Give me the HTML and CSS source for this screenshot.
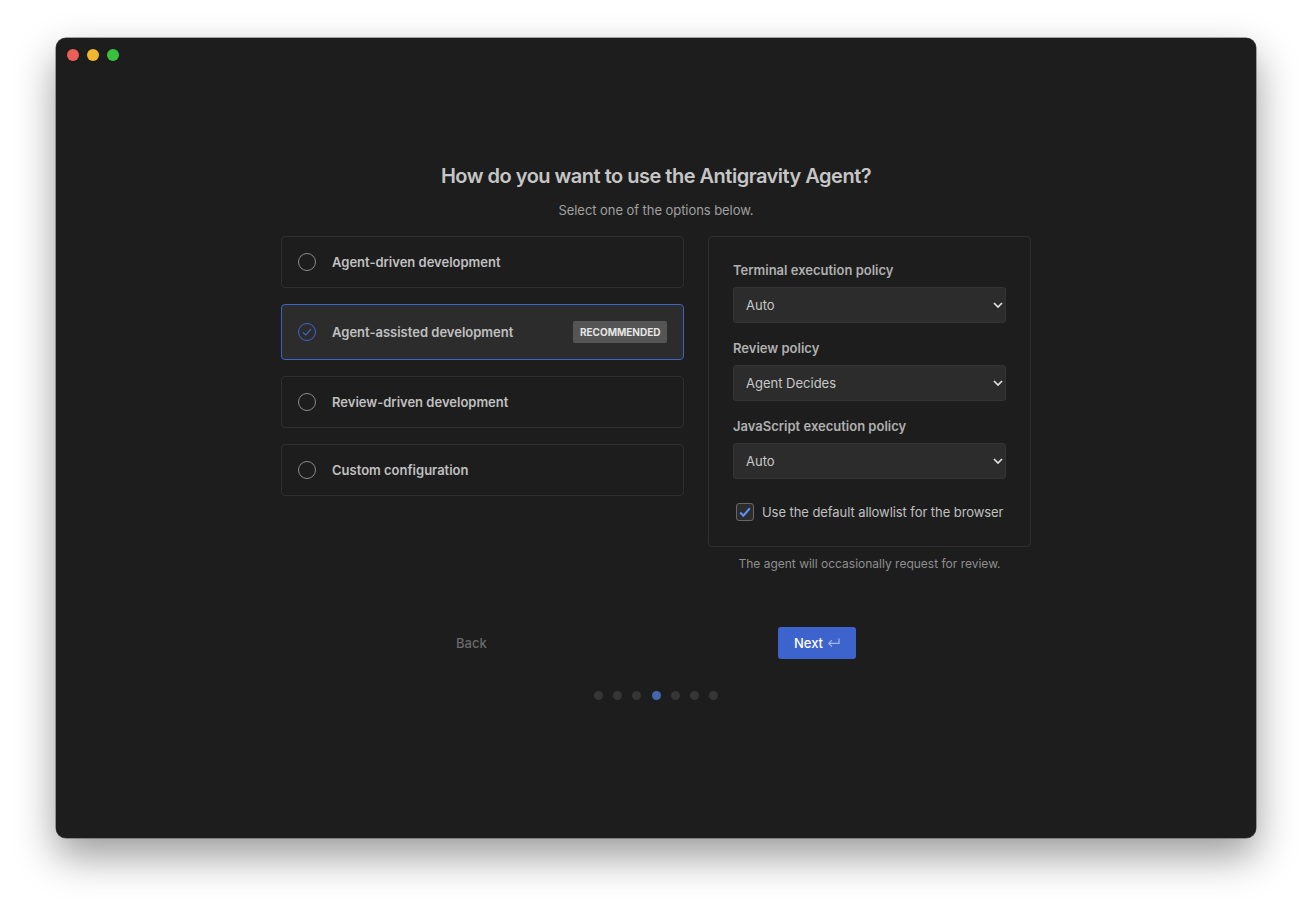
FILE: index.html
```html
<!DOCTYPE html>
<html lang="en">
<head>
<meta charset="utf-8">
<title>Antigravity Agent setup</title>
<link rel="stylesheet" href="styles.css">
</head>
<body>
<div class="window">
  <div class="titlebar">
    <span class="light light-red"></span>
    <span class="light light-yellow"></span>
    <span class="light light-green"></span>
  </div>
  <main class="main">
    <h1 class="title">How do you want to use the Antigravity Agent?</h1>
    <p class="subtitle">Select one of the options below.</p>
    <div class="columns">
      <div class="options">
        <div class="option">
          <span class="radio"></span>
          <span class="option-label">Agent-driven development</span>
        </div>
        <div class="option option-selected">
          <span class="radio radio-selected">
            <svg class="radio-check" viewBox="0 0 12 12" width="12" height="12"><path d="M2 6.4 4.8 9 10 3.2" fill="none" stroke="#3f66cc" stroke-width="1.2"/></svg>
          </span>
          <span class="option-label">Agent-assisted development</span>
          <span class="badge">RECOMMENDED</span>
        </div>
        <div class="option">
          <span class="radio"></span>
          <span class="option-label">Review-driven development</span>
        </div>
        <div class="option">
          <span class="radio"></span>
          <span class="option-label">Custom configuration</span>
        </div>
      </div>
      <div class="side">
        <div class="panel">
          <div class="field">
            <label class="field-label" for="terminal">Terminal execution policy</label>
            <div class="select-wrap">
              <select class="select" id="terminal"><option>Auto</option></select>
              <svg class="chevron" viewBox="0 0 10 6" width="10" height="6"><path d="M1 1 5 5 9 1" fill="none" stroke="#e2e2e2" stroke-width="1.7"/></svg>
            </div>
          </div>
          <div class="field">
            <label class="field-label" for="review">Review policy</label>
            <div class="select-wrap">
              <select class="select" id="review"><option>Agent Decides</option></select>
              <svg class="chevron" viewBox="0 0 10 6" width="10" height="6"><path d="M1 1 5 5 9 1" fill="none" stroke="#e2e2e2" stroke-width="1.7"/></svg>
            </div>
          </div>
          <div class="field">
            <label class="field-label" for="js">JavaScript execution policy</label>
            <div class="select-wrap">
              <select class="select" id="js"><option>Auto</option></select>
              <svg class="chevron" viewBox="0 0 10 6" width="10" height="6"><path d="M1 1 5 5 9 1" fill="none" stroke="#e2e2e2" stroke-width="1.7"/></svg>
            </div>
          </div>
          <div class="check-row">
            <span class="checkbox">
              <svg viewBox="0 0 14 14" width="14" height="14"><path d="M2.2 7.4 5.4 10.6 11.8 3.2" fill="none" stroke="#5b8ff5" stroke-width="2.1"/></svg>
            </span>
            <span class="check-label">Use the default allowlist for the browser</span>
          </div>
        </div>
        <p class="note">The agent will occasionally request for review.</p>
      </div>
    </div>
    <div class="actions">
      <span class="back">Back</span>
      <button class="next" type="button">Next
        <svg class="enter" viewBox="0 0 12 10" width="12" height="10"><path d="M11 .6V5.4H.8M3.9 2.2.8 5.4 3.9 8.6" fill="none" stroke="#a3b6e8" stroke-width="1.2"/></svg>
      </button>
    </div>
    <div class="dots">
      <span class="dot"></span>
      <span class="dot"></span>
      <span class="dot"></span>
      <span class="dot dot-active"></span>
      <span class="dot"></span>
      <span class="dot"></span>
      <span class="dot"></span>
    </div>
  </main>
</div>
</body>
</html>
```

FILE: styles.css
```css
* {
  box-sizing: border-box;
}

html,
body {
  height: 100%;
  margin: 0;
}

body {
  background: #fff;
  padding: 38px 56px;
  overflow: hidden;
  font-family: Inter, "Liberation Sans", sans-serif;
}

.window {
  width: 1200px;
  height: 800px;
  background: #1d1d1d;
  border-radius: 10px;
  box-shadow: 0 0 0 0.5px #555, 0 18px 40px rgba(0, 0, 0, 0.4);
}

.titlebar {
  display: flex;
  gap: 8px;
  padding: 11px 0 0 11px;
  height: 34px;
}

.light {
  width: 12px;
  height: 12px;
  border-radius: 50%;
}

.light-red {
  background: #ec5f56;
}

.light-yellow {
  background: #f1b62f;
}

.light-green {
  background: #37c23d;
}

.main {
  display: flex;
  flex-direction: column;
  align-items: center;
}

.title {
  margin: 92px 0 0;
  font-size: 20px;
  line-height: 24px;
  letter-spacing: -0.5px;
  font-weight: 600;
  color: #c6c6c6;
}

.subtitle {
  margin: 14px 0 0;
  font-size: 13px;
  line-height: 16px;
  letter-spacing: -0.06px;
  color: #a0a0a0;
}

.columns {
  display: flex;
  gap: 24px;
  width: 750px;
  margin-top: 18px;
}

.options {
  display: flex;
  flex-direction: column;
  gap: 16px;
  width: 403px;
}

.option {
  display: flex;
  align-items: center;
  height: 52px;
  padding: 0 16px;
  border: 1px solid #2f2f2f;
  border-radius: 4px;
}

.option-selected {
  height: 56px;
  background: #2c2c2c;
  border-color: #3c62c4;
}

.radio {
  display: flex;
  align-items: center;
  justify-content: center;
  width: 18px;
  height: 18px;
  border: 1px solid #8a8a8a;
  border-radius: 50%;
  flex: none;
}

.radio-selected {
  border-color: #3f66cc;
}

.option-label {
  margin-left: 16px;
  font-size: 13px;
  line-height: 16px;
  font-weight: 600;
  color: #c0c0c0;
}

.badge {
  margin-left: auto;
  padding: 0 6.5px;
  height: 22px;
  line-height: 22px;
  font-size: 10px;
  font-weight: 700;
  color: #e6e6e6;
  background: #555;
  border-radius: 2px;
}

.side {
  display: flex;
  flex-direction: column;
  width: 323px;
}

.panel {
  height: 311px;
  padding: 24px;
  border: 1px solid #2f2f2f;
  border-radius: 4px;
}

.field {
  margin-bottom: 16px;
}

.field-label {
  display: block;
  margin-bottom: 8px;
  font-size: 13px;
  line-height: 18px;
  font-weight: 600;
  color: #b0b0b0;
}

.select-wrap {
  position: relative;
}

.select {
  display: block;
  width: 100%;
  height: 36px;
  padding: 0 12px;
  appearance: none;
  font-family: inherit;
  font-size: 13px;
  color: #c8c8c8;
  background: #2c2c2c;
  border: 1px solid #343434;
  border-radius: 3px;
}

.chevron {
  position: absolute;
  right: 3px;
  top: 15px;
}

.check-row {
  display: flex;
  align-items: center;
  gap: 8px;
  margin-top: 23px;
  padding-left: 3px;
  height: 20px;
}

.checkbox {
  display: flex;
  align-items: center;
  justify-content: center;
  width: 18px;
  height: 18px;
  background: #2c2c2c;
  border: 1px solid #666;
  border-radius: 3px;
}

.check-label {
  font-size: 13px;
  line-height: 20px;
  letter-spacing: -0.07px;
  color: #c0c0c0;
  white-space: nowrap;
}

.note {
  margin: 9px 0 0;
  text-align: center;
  font-size: 12px;
  line-height: 16px;
  color: #8f8f8f;
}

.actions {
  display: flex;
  align-items: center;
  justify-content: space-between;
  width: 400px;
  margin-top: 55px;
}

.back {
  font-size: 13px;
  font-weight: 500;
  color: #6a6a6a;
}

.next {
  display: flex;
  align-items: center;
  justify-content: center;
  gap: 5px;
  width: 78px;
  height: 32px;
  padding: 0;
  font-family: inherit;
  font-size: 13px;
  font-weight: 500;
  color: #fff;
  background: #3d63cd;
  border: 0;
  border-radius: 3px;
}

.dots {
  display: flex;
  gap: 10.33px;
  margin-top: 32px;
}

.dot {
  width: 9px;
  height: 9px;
  border-radius: 50%;
  background: #363636;
}

.dot-active {
  background: #4566ae;
}
```
